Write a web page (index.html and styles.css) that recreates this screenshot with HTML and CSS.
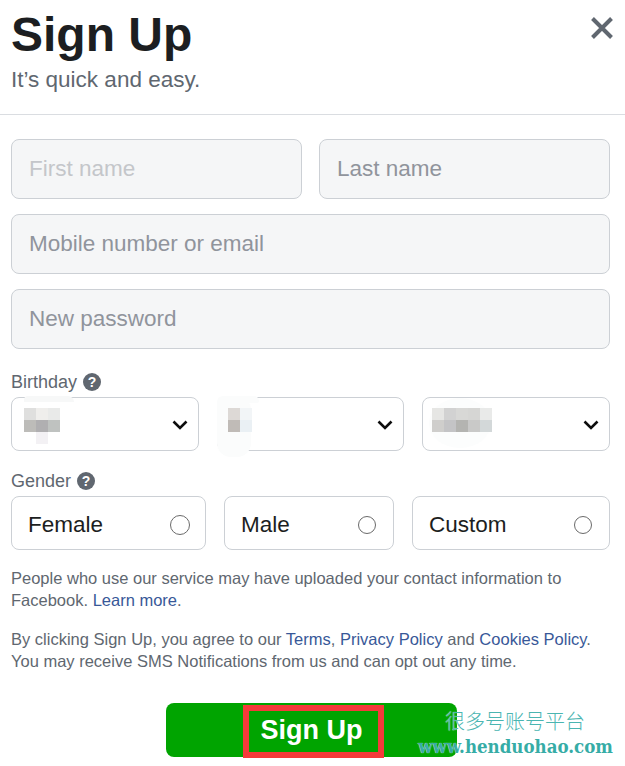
FILE: index.html
```html
<!DOCTYPE html>
<html lang="en">
<head>
<meta charset="utf-8">
<title>Sign Up</title>
<link rel="stylesheet" href="styles.css">
</head>
<body>
<main class="dialog">
  <header class="head">
    <div>
      <h1 class="title">Sign Up</h1>
      <p class="subtitle">It’s quick and easy.</p>
    </div>
    <svg class="close" viewBox="0 0 24 24" aria-label="Close"><path d="M2.5 2.5 21.5 21.5M21.5 2.5 2.5 21.5"/></svg>
  </header>
  <form class="form">
    <div class="pair">
      <input class="field field-faint" placeholder="First name">
      <input class="field" placeholder="Last name">
    </div>
    <input class="field" placeholder="Mobile number or email">
    <input class="field" placeholder="New password">

    <div class="label label-birthday">Birthday <span class="help">?</span></div>
    <div class="triple">
      <div class="select">
        <span class="smudge smudge-first"></span>
        <div class="mosaic m3">
          <i class="c-df"></i><i class="c-ef"></i><i class="c-e9"></i>
          <i class="c-bd"></i><i class="c-b0"></i><i class="c-bf"></i>
          <i></i><i class="c-f3"></i><i></i>
        </div>
        <svg class="chev" viewBox="0 0 16 10"><path d="M1.5 1.5 8 8l6.5-6.5"/></svg>
      </div>
      <div class="select select-mid">
        <span class="smudge smudge-mid"></span>
        <div class="mosaic m2">
          <i class="c-dd"></i><i class="c-f1"></i>
          <i class="c-c0"></i><i class="c-ea"></i>
        </div>
        <svg class="chev" viewBox="0 0 16 10"><path d="M1.5 1.5 8 8l6.5-6.5"/></svg>
      </div>
      <div class="select select-last">
        <span class="smudge smudge-last"></span>
        <div class="mosaic m5">
          <i class="c-e6"></i><i class="c-d2"></i><i class="c-d8"></i><i class="c-d6"></i><i class="c-e9"></i>
          <i class="c-cf"></i><i class="c-c4"></i><i class="c-b4"></i><i class="c-c9"></i><i class="c-d3"></i>
        </div>
        <svg class="chev" viewBox="0 0 16 10"><path d="M1.5 1.5 8 8l6.5-6.5"/></svg>
      </div>
    </div>

    <div class="label label-gender">Gender <span class="help">?</span></div>
    <div class="genders">
      <label class="gender">Female <span class="radio radio-big"></span></label>
      <label class="gender">Male <span class="radio"></span></label>
      <label class="gender">Custom <span class="radio"></span></label>
    </div>

    <p class="note">People who use our service may have uploaded your contact information to Facebook. <a class="link">Learn more</a>.</p>
    <p class="note note-terms">By clicking Sign Up, you agree to our <a class="link">Terms</a>, <a class="link">Privacy Policy</a> and <a class="link">Cookies Policy</a>. You may receive SMS Notifications from us and can opt out any time.</p>

    <div class="submit-row">
      <div class="submit"><span class="submit-text">Sign Up</span></div>
    </div>
  </form>
</main>
<div class="watermark">
  <div class="wm-cn">很多号账号平台</div>
  <div class="wm-en">www.henduohao.com</div>
</div>
</body>
</html>
```
FILE: styles.css
```css
* { box-sizing: border-box; }
html, body { margin: 0; background: #fff; }
body {
  width: 625px;
  height: 766px;
  overflow: hidden;
  position: relative;
  font-family: "Liberation Sans", Arial, sans-serif;
  color: #1c1e21;
}
.head {
  height: 115px;
  border-bottom: 1px solid #dadde1;
  padding: 6px 11px 0;
  display: flex;
  justify-content: space-between;
  align-items: flex-start;
}
.title {
  margin: 0;
  font-size: 48px;
  line-height: 58px;
  font-weight: 700;
  color: #1c1e21;
}
.subtitle {
  margin: 0;
  font-size: 22.5px;
  line-height: 32px;
  color: #606770;
}
.close {
  width: 24px;
  height: 24px;
  margin: 10px 0 0;
}
.close path { fill: none; stroke: #606770; stroke-width: 4; }
.form {
  padding: 24px 15px 0 11px;
  display: flex;
  flex-direction: column;
}
.pair { display: grid; grid-template-columns: 291px 291px; justify-content: space-between; }
.field {
  display: block;
  width: 100%;
  height: 60px;
  padding: 0 17px;
  border: 1px solid #ccd0d5;
  border-radius: 8px;
  background: #f5f6f7;
  font: 22.5px "Liberation Sans", Arial, sans-serif;
  color: #1c1e21;
  margin-bottom: 15px;
  outline: none;
}
.field::placeholder { color: #90949c; opacity: 1; }
.field-faint::placeholder { color: #c4c6ca; }
.label {
  font-size: 18px;
  line-height: 22px;
  color: #606770;
  display: flex;
  align-items: center;
  gap: 6px;
}
.label-birthday { margin-top: 5px; height: 26px; }
.label-gender { margin-top: 17px; height: 26px; }
.help {
  width: 18px;
  height: 18px;
  border-radius: 50%;
  background: #606770;
  color: #fff;
  font-size: 14px;
  font-weight: 700;
  line-height: 18px;
  text-align: center;
}
.triple { display: grid; grid-template-columns: 188px 187px 188px; justify-content: space-between; margin-top: 2px; }
.select {
  position: relative;
  height: 54px;
  border: 1px solid #ccd0d5;
  border-radius: 8px;
  background: #fff;
  display: flex;
  align-items: flex-start;
  justify-content: space-between;
  padding: 10px 10px 0 12px;
}
.select-mid { padding-left: 10px; }
.select-last { padding-left: 9px; }
.mosaic { display: grid; grid-auto-rows: 12px; grid-template-columns: repeat(var(--n), 12px); position: relative; }
.m3 { --n: 3; }
.m2 { --n: 2; }
.m5 { --n: 5; }
.mosaic i { display: block; }
.c-df { background: #dfdfde; } .c-ef { background: #efeeec; } .c-e9 { background: #e9eae9; }
.c-bd { background: #bdbcb9; } .c-b0 { background: #b0afb1; } .c-bf { background: #bfc2c0; }
.c-f3 { background: #f3f1f4; }
.c-dd { background: #ddd9d6; } .c-f1 { background: #f2f5f7; }
.c-c0 { background: #c0bbb7; } .c-ea { background: #eaf0f4; }
.c-e6 { background: #e6e6e4; } .c-d2 { background: #d2d2d2; } .c-d8 { background: #d8d8d6; } .c-d6 { background: #d6d6d4; }
.c-cf { background: #cfcecc; } .c-c4 { background: #c4c4c6; } .c-b4 { background: #b4b4b1; } .c-c9 { background: #c9c9c8; } .c-d3 { background: #d3d8d9; }
.chev { width: 16px; height: 10px; margin-top: 12px; }
.chev path { fill: none; stroke: #0d0d0d; stroke-width: 2.6; }
.smudge {
  position: absolute;
  background: #fbfcfc;
}
.smudge-first {
  left: 12px;
  top: -2px;
  width: 50px;
  height: 6px;
  background: #f7f8f8;
  border-radius: 12px 18px 0 0;
}
.smudge-mid {
  left: -1px;
  top: -2px;
  width: 34px;
  height: 61px;
  border-radius: 6px 14px 14px 14px;
}
.smudge-mid::after {
  content: "";
  position: absolute;
  left: 20px;
  top: 0;
  width: 22px;
  height: 7px;
  background: #fbfcfc;
  border-radius: 0 10px 4px 0;
}
.smudge-last {
  left: 6px;
  top: 0;
  width: 62px;
  height: 50px;
  background: #fcfdfd;
  border-radius: 50%;
}
.genders {
  display: grid;
  grid-template-columns: 195px 170px 198px;
  justify-content: space-between;
  margin-top: 2px;
}
.gender {
  height: 54px;
  border: 1px solid #ccd0d5;
  border-radius: 8px;
  padding: 4px 16px 0;
  display: flex;
  align-items: center;
  justify-content: space-between;
  font-size: 22.5px;
  color: #1c1e21;
}
.radio {
  width: 18px;
  height: 18px;
  border: 1.5px solid #6a6a6a;
  border-radius: 50%;
  margin-right: 1px;
}
.radio-big { width: 20px; height: 20px; margin-right: -1px; }
.note {
  margin: 17px 0 0;
  font-size: 16.5px;
  line-height: 22px;
  color: #606770;
}
.note-terms { margin-top: 17px; }
.link { color: #385898; }
.submit-row { display: flex; justify-content: center; margin-top: 31px; padding-left: 2px; }
.submit {
  width: 291px;
  height: 54px;
  background: #00a400;
  border-radius: 8px;
  position: relative;
  display: flex;
  justify-content: center;
}
.submit-text {
  width: 141px;
  height: 53px;
  margin: 2px 0 0 4px;
  padding-right: 4px;
  border: 6.5px solid #f53a3a;
  color: #fff;
  font-size: 27px;
  font-weight: 700;
  line-height: 39px;
  text-align: center;
}
.watermark {
  position: absolute;
  left: 418px;
  top: 708px;
  width: 200px;
  color: #36aca6;
  text-shadow: 0 0 1px #fff;
}
.wm-cn {
  padding-left: 27px;
  font: 300 20px/26px "Noto Sans CJK SC", sans-serif;
  color: #4ab5b1;
}
.wm-en {
  margin-top: 1px;
  font: 700 18.5px/24px "DejaVu Serif Condensed", "DejaVu Serif", serif;
  font-stretch: condensed;
  white-space: nowrap;
}
```
